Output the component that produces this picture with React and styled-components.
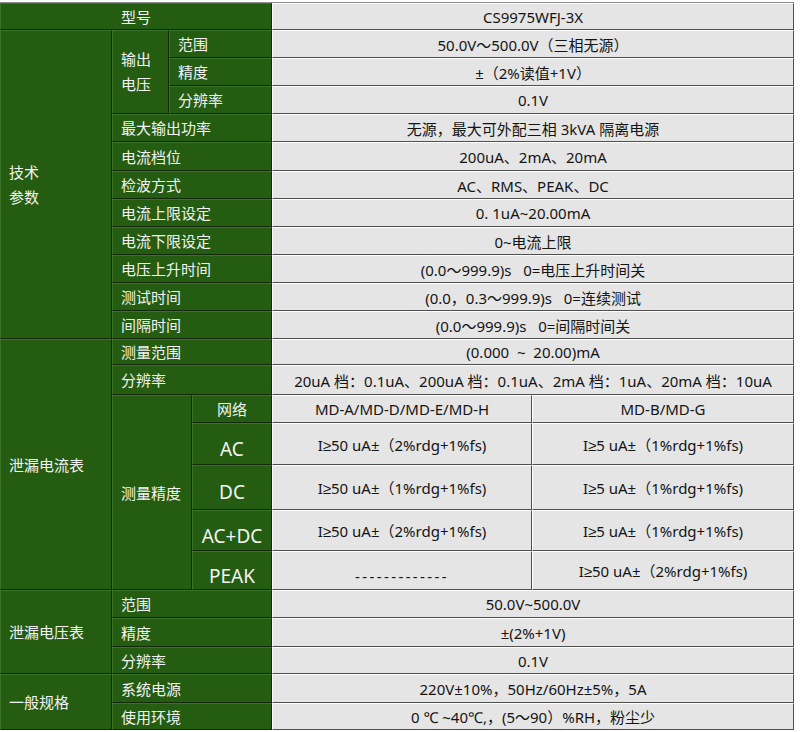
import React from "react";
import styled, { createGlobalStyle } from "styled-components";

const GlobalStyle = createGlobalStyle`
  body {
    margin: 0;
    background: #ffffff;
    font-family: "Noto Sans", "Liberation Sans", "Noto Sans CJK SC", sans-serif;
  }
`;

const Page = styled.div`
  padding-top: 2px;
  width: 800px;
`;

const Sheet = styled.table`
  width: 794px;
  table-layout: fixed;
  border-collapse: separate;
  border-spacing: 0;
  border-top: 1px solid #8c8c8c;
  font-size: 15px;
`;

const Row = styled.tr`
  height: ${(p) => p.$h}px;
`;

const Key = styled.td`
  background: #245c12;
  color: #f3f3f3;
  border-top: 1px solid #3a7327;
  border-left: 1px solid #3a7327;
  border-right: 1px solid #14280b;
  border-bottom: 1px solid #14280b;
  padding: ${(p) => p.$pt || 0}px 8px 0;
  text-align: ${(p) => p.$align || "left"};
  font-size: ${(p) => p.$size || 15}px;
  line-height: ${(p) => p.$lh || 20}px;
  white-space: nowrap;
  vertical-align: middle;
`;

const Val = styled.td`
  background: #e5e5e5;
  color: #141414;
  border-top: 1px solid #ffffff;
  border-left: 1px solid #ffffff;
  border-right: 1px solid #4f4f4f;
  border-bottom: 1px solid #4f4f4f;
  padding: ${(p) => p.$pt || 0}px 4px 0;
  text-align: center;
  white-space: pre;
  vertical-align: middle;
`;

const Dashes = styled.span`
  letter-spacing: 2.4px;
`;

export default function App() {
  return (
    <Page>
      <GlobalStyle />
      <Sheet>
        <colgroup>
          <col style={{ width: 112 }} />
          <col style={{ width: 57 }} />
          <col style={{ width: 23 }} />
          <col style={{ width: 80 }} />
          <col style={{ width: 260 }} />
          <col style={{ width: 262 }} />
        </colgroup>
        <tbody>
          <Row $h={27}>
            <Key colSpan={4} $align="center">型号</Key>
            <Val colSpan={2}>CS9975WFJ-3X</Val>
          </Row>

          {/* 技术参数 */}
          <Row $h={28}>
            <Key rowSpan={11} $lh={25}>
              技术
              <br />
              参数
            </Key>
            <Key rowSpan={3} $lh={25}>
              输出
              <br />
              电压
            </Key>
            <Key colSpan={2}>范围</Key>
            <Val colSpan={2}>50.0V～500.0V（三相无源）</Val>
          </Row>
          <Row $h={28}>
            <Key colSpan={2}>精度</Key>
            <Val colSpan={2}>±（2%读值+1V）</Val>
          </Row>
          <Row $h={28}>
            <Key colSpan={2}>分辨率</Key>
            <Val colSpan={2}>0.1V</Val>
          </Row>
          <Row $h={28}>
            <Key colSpan={3}>最大输出功率</Key>
            <Val colSpan={2}>无源，最大可外配三相 3kVA 隔离电源</Val>
          </Row>
          <Row $h={29}>
            <Key colSpan={3}>电流档位</Key>
            <Val colSpan={2}>200uA、2mA、20mA</Val>
          </Row>
          <Row $h={28}>
            <Key colSpan={3}>检波方式</Key>
            <Val colSpan={2}>AC、RMS、PEAK、DC</Val>
          </Row>
          <Row $h={28}>
            <Key colSpan={3}>电流上限设定</Key>
            <Val colSpan={2}>0. 1uA~20.00mA</Val>
          </Row>
          <Row $h={28}>
            <Key colSpan={3}>电流下限设定</Key>
            <Val colSpan={2}>0~电流上限</Val>
          </Row>
          <Row $h={28}>
            <Key colSpan={3}>电压上升时间</Key>
            <Val colSpan={2}>(0.0～999.9)s   0=电压上升时间关</Val>
          </Row>
          <Row $h={28}>
            <Key colSpan={3}>测试时间</Key>
            <Val colSpan={2}>(0.0，0.3～999.9)s   0=连续测试</Val>
          </Row>
          <Row $h={28}>
            <Key colSpan={3}>间隔时间</Key>
            <Val colSpan={2}>(0.0～999.9)s   0=间隔时间关</Val>
          </Row>

          {/* 泄漏电流表 */}
          <Row $h={26}>
            <Key rowSpan={7}>泄漏电流表</Key>
            <Key colSpan={3}>测量范围</Key>
            <Val colSpan={2}>(0.000  ~  20.00)mA</Val>
          </Row>
          <Row $h={30}>
            <Key colSpan={3}>分辨率</Key>
            <Val colSpan={2}>20uA 档：0.1uA、200uA 档：0.1uA、2mA 档：1uA、20mA 档：10uA</Val>
          </Row>
          <Row $h={28}>
            <Key rowSpan={5} colSpan={2}>测量精度</Key>
            <Key $align="center">网络</Key>
            <Val>MD-A/MD-D/MD-E/MD-H</Val>
            <Val>MD-B/MD-G</Val>
          </Row>
          <Row $h={42}>
            <Key $align="center" $size={19} $pt={10}>AC</Key>
            <Val>I≥50 uA±（2%rdg+1%fs)</Val>
            <Val>I≥5 uA±（1%rdg+1%fs)</Val>
          </Row>
          <Row $h={45}>
            <Key $align="center" $size={19} $pt={8}>DC</Key>
            <Val>I≥50 uA±（1%rdg+1%fs)</Val>
            <Val>I≥5 uA±（1%rdg+1%fs)</Val>
          </Row>
          <Row $h={41}>
            <Key $align="center" $size={19} $pt={10}>AC+DC</Key>
            <Val>I≥50 uA±（2%rdg+1%fs)</Val>
            <Val>I≥5 uA±（1%rdg+1%fs)</Val>
          </Row>
          <Row $h={39}>
            <Key $align="center" $size={19} $pt={10}>PEAK</Key>
            <Val $pt={10}>
              <Dashes>-------------</Dashes>
            </Val>
            <Val>I≥50 uA±（2%rdg+1%fs)</Val>
          </Row>

          {/* 泄漏电压表 */}
          <Row $h={28}>
            <Key rowSpan={3}>泄漏电压表</Key>
            <Key colSpan={3}>范围</Key>
            <Val colSpan={2}>50.0V~500.0V</Val>
          </Row>
          <Row $h={29}>
            <Key colSpan={3}>精度</Key>
            <Val colSpan={2}>±(2%+1V)</Val>
          </Row>
          <Row $h={27}>
            <Key colSpan={3}>分辨率</Key>
            <Val colSpan={2}>0.1V</Val>
          </Row>

          {/* 一般规格 */}
          <Row $h={29}>
            <Key rowSpan={2}>一般规格</Key>
            <Key colSpan={3}>系统电源</Key>
            <Val colSpan={2}>220V±10%，50Hz/60Hz±5%，5A</Val>
          </Row>
          <Row $h={27}>
            <Key colSpan={3}>使用环境</Key>
            <Val colSpan={2}>0 ℃ ~40℃,，(5～90）%RH，粉尘少</Val>
          </Row>
        </tbody>
      </Sheet>
    </Page>
  );
}
